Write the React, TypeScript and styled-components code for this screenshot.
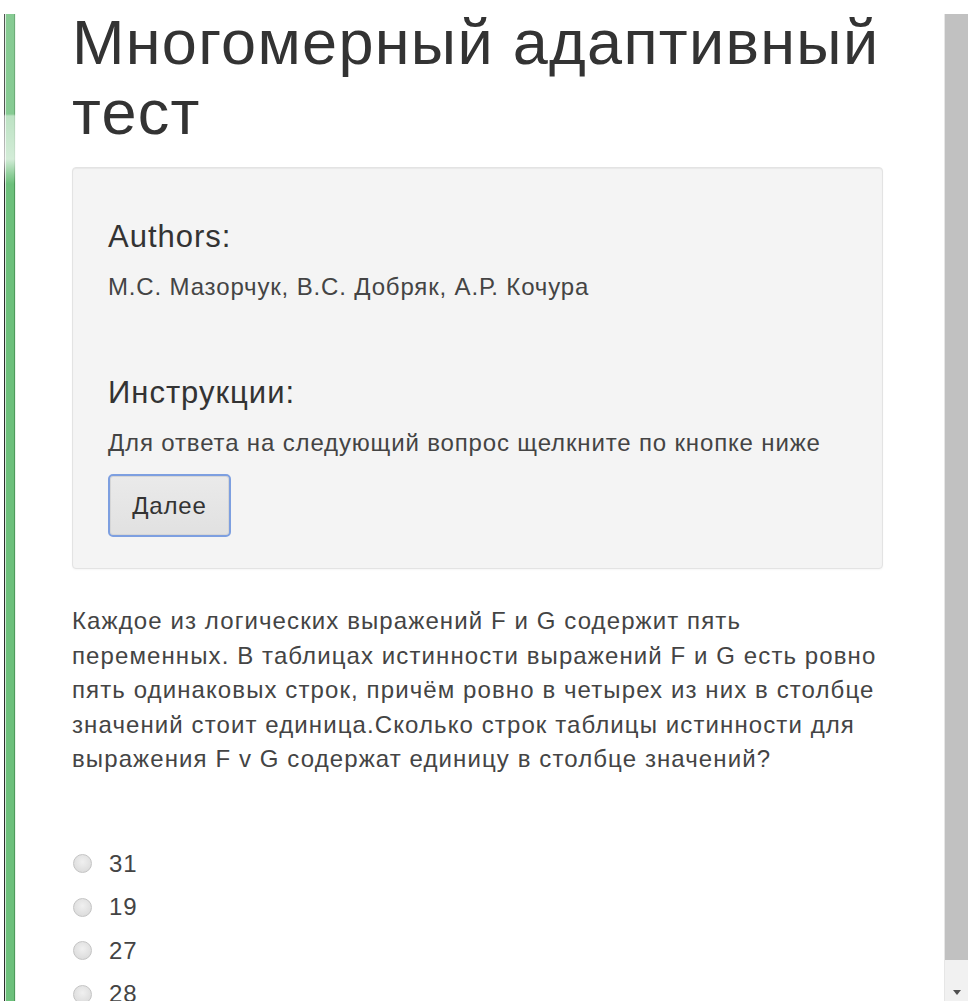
import React from 'react'
import styled, { createGlobalStyle } from 'styled-components'

const GlobalStyle = createGlobalStyle`
  html, body {
    margin: 0;
    padding: 0;
    background: #fff;
  }
  body {
    font-family: "Liberation Sans", Arial, sans-serif;
    color: #333;
  }
`

const Page = styled.div`
  display: flex;
  height: 1001px;
  overflow: hidden;
  background: #fff;
`

const LeftRail = styled.div`
  width: 16px;
  flex: none;
  padding: 14px 0 0 4px;
  box-sizing: border-box;
  display: flex;
`

const GreenBar = styled.div`
  width: 12px;
  background:
    linear-gradient(to bottom,
      rgba(255, 255, 255, 0.18) 0,
      rgba(255, 255, 255, 0.18) 100px,
      rgba(255, 255, 255, 0.55) 102px,
      rgba(255, 255, 255, 0.7) 145px,
      rgba(255, 255, 255, 0.25) 160px,
      rgba(255, 255, 255, 0) 170px),
    linear-gradient(to right,
      #2b2b2b 0, #2b2b2b 1px,
      #d4ecd8 1px, #d4ecd8 2px,
      #6cc07b 2px, #6cc07b 10px,
      #4e9a5b 10px, #4e9a5b 11px,
      #e9f5ea 11px);
`

const Main = styled.main`
  flex: 1;
  padding-left: 56px;
  min-width: 0;
`

const Content = styled.div`
  width: 813px;
`

const Title = styled.h1`
  margin: 7px 0 20px;
  font-size: 63px;
  line-height: 70px;
  font-weight: 400;
  color: #333;
  letter-spacing: 1.3px;
`

const Well = styled.section`
  width: 811px;
  box-sizing: border-box;
  padding: 33px 35px 31px;
  background: #f4f4f4;
  border: 1px solid #e3e3e3;
  border-radius: 4px;
  box-shadow: inset 0 1px 1px rgba(0, 0, 0, 0.05), 0 1px 2px rgba(0, 0, 0, 0.04);
`

const Heading = styled.h4<{ $gap?: number }>`
  margin: ${p => p.$gap ?? 18}px 0 16px;
  font-size: 31px;
  line-height: 35px;
  font-weight: 400;
  color: #333;
  letter-spacing: 1px;
`

const Text = styled.p<{ $after?: number }>`
  margin: 0 0 ${p => p.$after ?? 0}px;
  font-size: 24px;
  line-height: 34.5px;
  color: #444;
  letter-spacing: 0.85px;
  white-space: nowrap;
`

const NextButton = styled.button`
  display: block;
  width: 123px;
  height: 63px;
  padding: 0;
  font-family: "Liberation Sans", Arial, sans-serif;
  font-size: 24px;
  letter-spacing: 0.85px;
  color: #333;
  background: linear-gradient(to bottom, #eaeaea, #e1e1e1);
  border: 2px solid #7d9fe0;
  border-radius: 5px;
  box-shadow: inset 0 0 0 1px #d6d6d6;
  cursor: pointer;
`

const Question = styled.p`
  margin: 35px 0 0;
  font-size: 24px;
  line-height: 34.5px;
  color: #444;
  letter-spacing: 1.1px;
  white-space: nowrap;
`

const Options = styled.div`
  margin-top: 70px;
  display: flex;
  flex-direction: column;
  gap: 9px;
`

const Option = styled.label`
  display: flex;
  align-items: center;
  gap: 17px;
  height: 34.5px;
  font-size: 24px;
  letter-spacing: 0.85px;
  color: #444;
`

const RadioDot = styled.span`
  width: 19px;
  height: 19px;
  border-radius: 50%;
  box-sizing: border-box;
  border: 1px solid #c4c4c4;
  background: radial-gradient(circle at 50% 40%, #f0f0f0 0, #e2e2e2 55%, #d6d6d6 100%);
  margin-left: 1px;
`

const ScrollTrack = styled.div`
  width: 23px;
  flex: none;
  margin: 14px 3px 0 0;
  display: flex;
  flex-direction: column;
  border-left: 1px solid #e6e6e6;
`

const ScrollThumb = styled.div`
  flex: 1;
  background: #c1c1c1;
`

const ScrollArrow = styled.div`
  height: 41px;
  flex: none;
  display: flex;
  align-items: flex-end;
  justify-content: center;
  padding-bottom: 6px;
  box-sizing: border-box;
  background: #f1f1f1;
`

const answers = ['31', '19', '27', '28']

export default function App() {
  return (
    <Page>
      <GlobalStyle />
      <LeftRail>
        <GreenBar />
      </LeftRail>
      <Main>
        <Content>
          <Title>Многомерный адаптивный тест</Title>
          <Well>
            <Heading>Authors:</Heading>
            <Text $after={70}>М.С. Мазорчук, В.С. Добряк, А.Р. Кочура</Text>
            <Heading $gap={0}>Инструкции:</Heading>
            <Text $after={14}>Для ответа на следующий вопрос щелкните по кнопке ниже</Text>
            <NextButton type="button">Далее</NextButton>
          </Well>
          <Question>
            Каждое из логических выражений F и G содержит пять<br />
            переменных. В таблицах истинности выражений F и G есть ровно<br />
            пять одинаковых строк, причём ровно в четырех из них в столбце<br />
            значений стоит единица.Сколько строк таблицы истинности для<br />
            выражения F v G содержат единицу в столбце значений?
          </Question>
          <Options>
            {answers.map(a => (
              <Option key={a}>
                <RadioDot />
                {a}
              </Option>
            ))}
          </Options>
        </Content>
      </Main>
      <ScrollTrack>
        <ScrollThumb />
        <ScrollArrow>
          <svg width="8" height="5" viewBox="0 0 8 5">
            <path d="M0 0h8L4 5z" fill="#505050" />
          </svg>
        </ScrollArrow>
      </ScrollTrack>
    </Page>
  )
}
